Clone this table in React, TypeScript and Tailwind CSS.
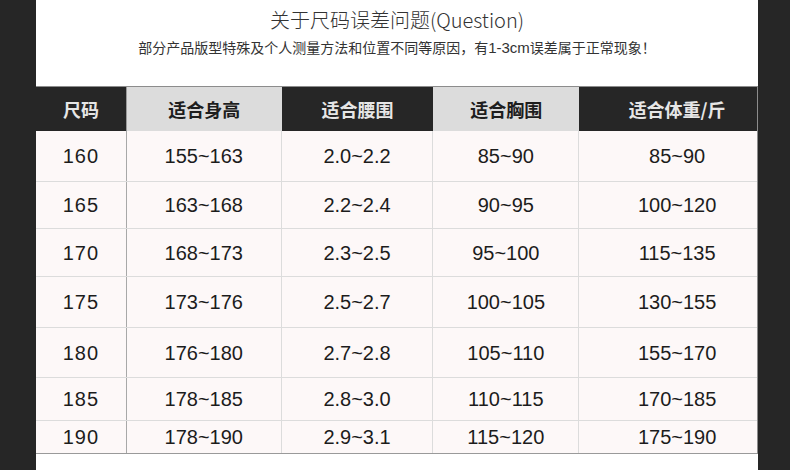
import React from "react";

const cols = [
  { w: "w-[91px]", dark: true, label: "尺码", extra: "" },
  { w: "w-[155px]", dark: false, label: "适合身高", extra: "" },
  { w: "w-[152px]", dark: true, label: "适合腰围", extra: "" },
  { w: "w-[146px]", dark: false, label: "适合胸围", extra: "" },
  { w: "w-[178px]", dark: true, label: "适合体重/斤", extra: "pl-[18px]" },
];

const rows: { h: string; v: string[] }[] = [
  { h: "h-[51px]", v: ["160", "155~163", "2.0~2.2", "85~90", "85~90"] },
  { h: "h-[47px]", v: ["165", "163~168", "2.2~2.4", "90~95", "100~120"] },
  { h: "h-[48px]", v: ["170", "168~173", "2.3~2.5", "95~100", "115~135"] },
  { h: "h-[51px]", v: ["175", "173~176", "2.5~2.7", "100~105", "130~155"] },
  { h: "h-[50px]", v: ["180", "176~180", "2.7~2.8", "105~110", "155~170"] },
  { h: "h-[43px]", v: ["185", "178~185", "2.8~3.0", "110~115", "170~185"] },
  { h: "h-[33px]", v: ["190", "178~190", "2.9~3.1", "115~120", "175~190"] },
];

export default function App() {
  return (
    <div className="w-[790px] h-[470px] bg-[#262626] flex overflow-hidden">
      <div className="ml-[36px] w-[722px] h-[470px] bg-white flex flex-col">
        <div className="h-[86px] flex flex-col items-center text-[#333]">
          <div className="mt-[7px] h-[26px] flex items-center text-[20px] font-light leading-none font-['Noto_Sans_CJK_SC','Noto_Sans',sans-serif]">
            关于尺码误差问题(Question)
          </div>
          <div className="mt-[2px] h-[24px] flex items-center text-[14px] leading-none text-[#333] font-['Noto_Sans_CJK_SC','Noto_Sans',sans-serif]">
            部分产品版型特殊及个人测量方法和位置不同等原因，有<span className="text-[15px] font-['Liberation_Sans',Arial,sans-serif]">1-3cm</span>误差属于正常现象！
          </div>
        </div>
        <div className="border-t border-[#8c8c8c] border-r border-r-[#8c8c8c] flex flex-col">
          <div className="h-[44px] flex">
            {cols.map((c, i) => (
              <div
                key={i}
                className={`${c.w} ${c.extra} h-full flex items-center justify-center text-[18px] font-bold font-['Noto_Sans_CJK_SC','Noto_Sans',sans-serif] ${
                  c.dark ? "bg-[#262626] text-[#e6e6e6]" : "bg-[#dcdcdc] text-[#1e1e1e]"
                } ${i === 0 ? "border-r border-[#9a9a9a]" : ""}`}
              >
                {c.label}
              </div>
            ))}
          </div>
          {rows.map((r, ri) => (
            <div
              key={ri}
              className={`${r.h} flex bg-[#fdf8f8] border-b ${
                ri === rows.length - 1 ? "border-[#9a9a9a]" : "border-[#dcdcdc]"
              }`}
            >
              {r.v.map((t, ci) => (
                <div
                  key={ci}
                  className={`${cols[ci].w} ${cols[ci].extra} h-full flex items-center justify-center text-[20px] text-[#1c1c1c] font-['Liberation_Sans',Arial,sans-serif] ${
                    ci === 0
                      ? "border-r border-[#a8a8a8] tracking-[1px]"
                      : ci < 4
                      ? "border-r border-[#dcdcdc]"
                      : ""
                  }`}
                >
                  {t}
                </div>
              ))}
            </div>
          ))}
        </div>
      </div>
    </div>
  );
}
